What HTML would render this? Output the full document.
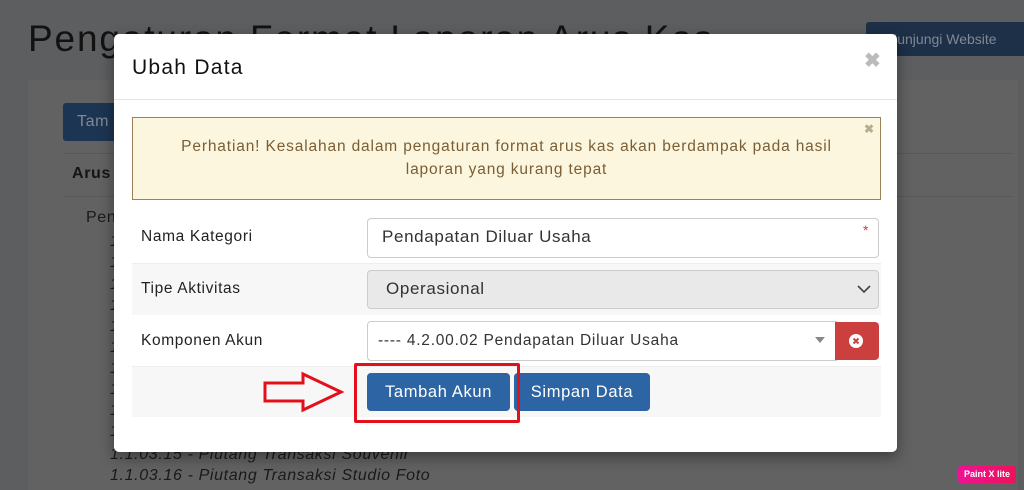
<!DOCTYPE html>
<html><head><style>
*{box-sizing:border-box;margin:0;padding:0}
html,body{width:1024px;height:490px;overflow:hidden}
body{background:#5d5e60;font-family:"Liberation Sans",sans-serif;position:relative;letter-spacing:.04em}
.a{position:absolute}
.it{position:absolute;left:110px;font-style:italic;font-size:16px;color:#1a1a1a;white-space:nowrap}
.lbl{position:absolute;left:141px;font-size:15.5px;color:#222}
</style></head><body>
<div class="a" style="left:28px;top:80px;width:990px;height:420px;background:#626262"></div>
<div class="a" style="left:28px;top:18px;font-size:37px;color:#121212;white-space:nowrap;letter-spacing:.05em">Pengaturan Format Laporan Arus Kas</div>
<div class="a" style="left:866px;top:22px;width:160px;height:34px;background:#1d3048;border-radius:3px;color:#808894;font-size:14px;line-height:34px;padding-left:8px;letter-spacing:0">⧉ Kunjungi Website</div>
<div class="a" style="left:63px;top:103px;width:60px;height:38px;background:#1c3553;border-radius:3px;color:#808894;font-size:16px;line-height:38px;padding-left:14px">Tam</div>
<div class="a" style="left:63px;top:153px;width:950px;border-top:1px solid #585858"></div>
<div class="a" style="left:72px;top:165px;font-weight:bold;font-size:16px;color:#151515">Arus</div>
<div class="a" style="left:63px;top:196px;width:950px;border-top:1px solid #585858"></div>
<div class="a" style="left:86px;top:209px;font-size:16px;color:#1a1a1a">Pen</div>
<div class="it" style="top:233px">1</div><div class="it" style="top:254px">1</div><div class="it" style="top:276px">1</div><div class="it" style="top:297px">1</div><div class="it" style="top:318px">1</div><div class="it" style="top:339px">1</div><div class="it" style="top:360px">1</div><div class="it" style="top:381px">1</div><div class="it" style="top:402px">1</div><div class="it" style="top:423px">1</div>
<div class="it" style="top:446px">1.1.03.15 - Piutang Transaksi Souvenir</div>
<div class="it" style="top:467px">1.1.03.16 - Piutang Transaksi Studio Foto</div>

<div class="a" style="left:114px;top:34px;width:783px;height:418px;background:#fff;border-radius:5px;box-shadow:0 5px 15px rgba(0,0,0,.4)">
 <div class="a" style="left:18px;top:22px;font-size:21px;color:#111;letter-spacing:.06em">Ubah Data</div>
 <div class="a" style="left:750px;top:14px;font-size:20px;color:#bbb;font-weight:bold">✖</div>
 <div class="a" style="left:0;top:65px;width:783px;border-top:1px solid #e5e5e5"></div>
 <div class="a" style="left:18px;top:83px;width:749px;height:83px;background:#fcf6de;border:1px solid #9b8155"></div>
 <div class="a" style="left:750px;top:88px;font-size:12px;color:#b9ad90;font-weight:bold">✖</div>
 <div class="a" style="left:18px;top:101px;width:749px;text-align:center;font-size:15.5px;line-height:23px;color:#7a5e35;letter-spacing:.055em">Perhatian! Kesalahan dalam pengaturan format arus kas akan berdampak pada hasil<br>laporan yang kurang tepat</div>
 <div class="a" style="left:18px;top:229px;width:749px;height:52px;background:#f7f7f7;border-top:1px solid #eee"></div>
 <div class="a" style="left:18px;top:332px;width:749px;height:51px;background:#f7f7f7;border-top:1px solid #eee"></div>
</div>
<div class="lbl" style="top:228px">Nama Kategori</div>
<div class="lbl" style="top:280px">Tipe Aktivitas</div>
<div class="lbl" style="top:332px">Komponen Akun</div>
<div class="a" style="left:367px;top:218px;width:512px;height:40px;border:1px solid #ccc;border-radius:4px;font-size:17px;color:#333;padding:8px 14px">Pendapatan Diluar Usaha</div>
<div class="a" style="left:863px;top:222px;color:#d33;font-size:14px">*</div>
<div class="a" style="left:367px;top:270px;width:512px;height:39px;border:1px solid #ccc;border-radius:4px;background:#e9e9e9;font-size:17px;color:#333;padding:8px 18px">Operasional</div>
<svg class="a" style="left:856px;top:283px" width="16" height="12"><path d="M2 3l6 6 6-6" stroke="#444" stroke-width="1.6" fill="none"/></svg>
<div class="a" style="left:367px;top:321px;width:470px;height:40px;border:1px solid #ccc;border-radius:4px 0 0 4px;font-size:15.5px;color:#333;padding:10px 10px;letter-spacing:.05em">---- 4.2.00.02 Pendapatan Diluar Usaha</div>
<svg class="a" style="left:815px;top:337px" width="10" height="7"><path d="M0 0h10L5 6z" fill="#888"/></svg>
<div class="a" style="left:835px;top:322px;width:44px;height:38px;background:#cc3f3f;border-radius:0 4px 4px 0"></div>
<svg class="a" style="left:848px;top:333px" width="16" height="16"><circle cx="8" cy="8" r="7" fill="#fff"/><path d="M5.5 5.5l5 5M10.5 5.5l-5 5" stroke="#cc3f3f" stroke-width="2"/></svg>
<div class="a" style="left:367px;top:373px;width:143px;height:38px;background:#2d64a3;border-radius:4px;color:#fff;font-size:16.5px;line-height:38px;text-align:center">Tambah Akun</div>
<div class="a" style="left:514px;top:373px;width:136px;height:38px;background:#2d64a3;border-radius:4px;color:#fff;font-size:16.5px;line-height:38px;text-align:center">Simpan Data</div>
<div class="a" style="left:354px;top:363px;width:166px;height:60px;border:3px solid #e3101b;border-radius:2px"></div>
<svg class="a" style="left:262px;top:371px" width="82" height="42"><path d="M3 12h38V3l38 18-38 18v-9H3z" fill="none" stroke="#e3101b" stroke-width="3" stroke-linejoin="miter"/></svg>
<div class="a" style="left:958px;top:466px;width:58px;height:17px;background:linear-gradient(90deg,#ee1296,#f0105a);border-radius:3px;color:#fff;font-size:9px;font-weight:bold;line-height:17px;text-align:center;letter-spacing:0">Paint X lite</div>
</body></html>
